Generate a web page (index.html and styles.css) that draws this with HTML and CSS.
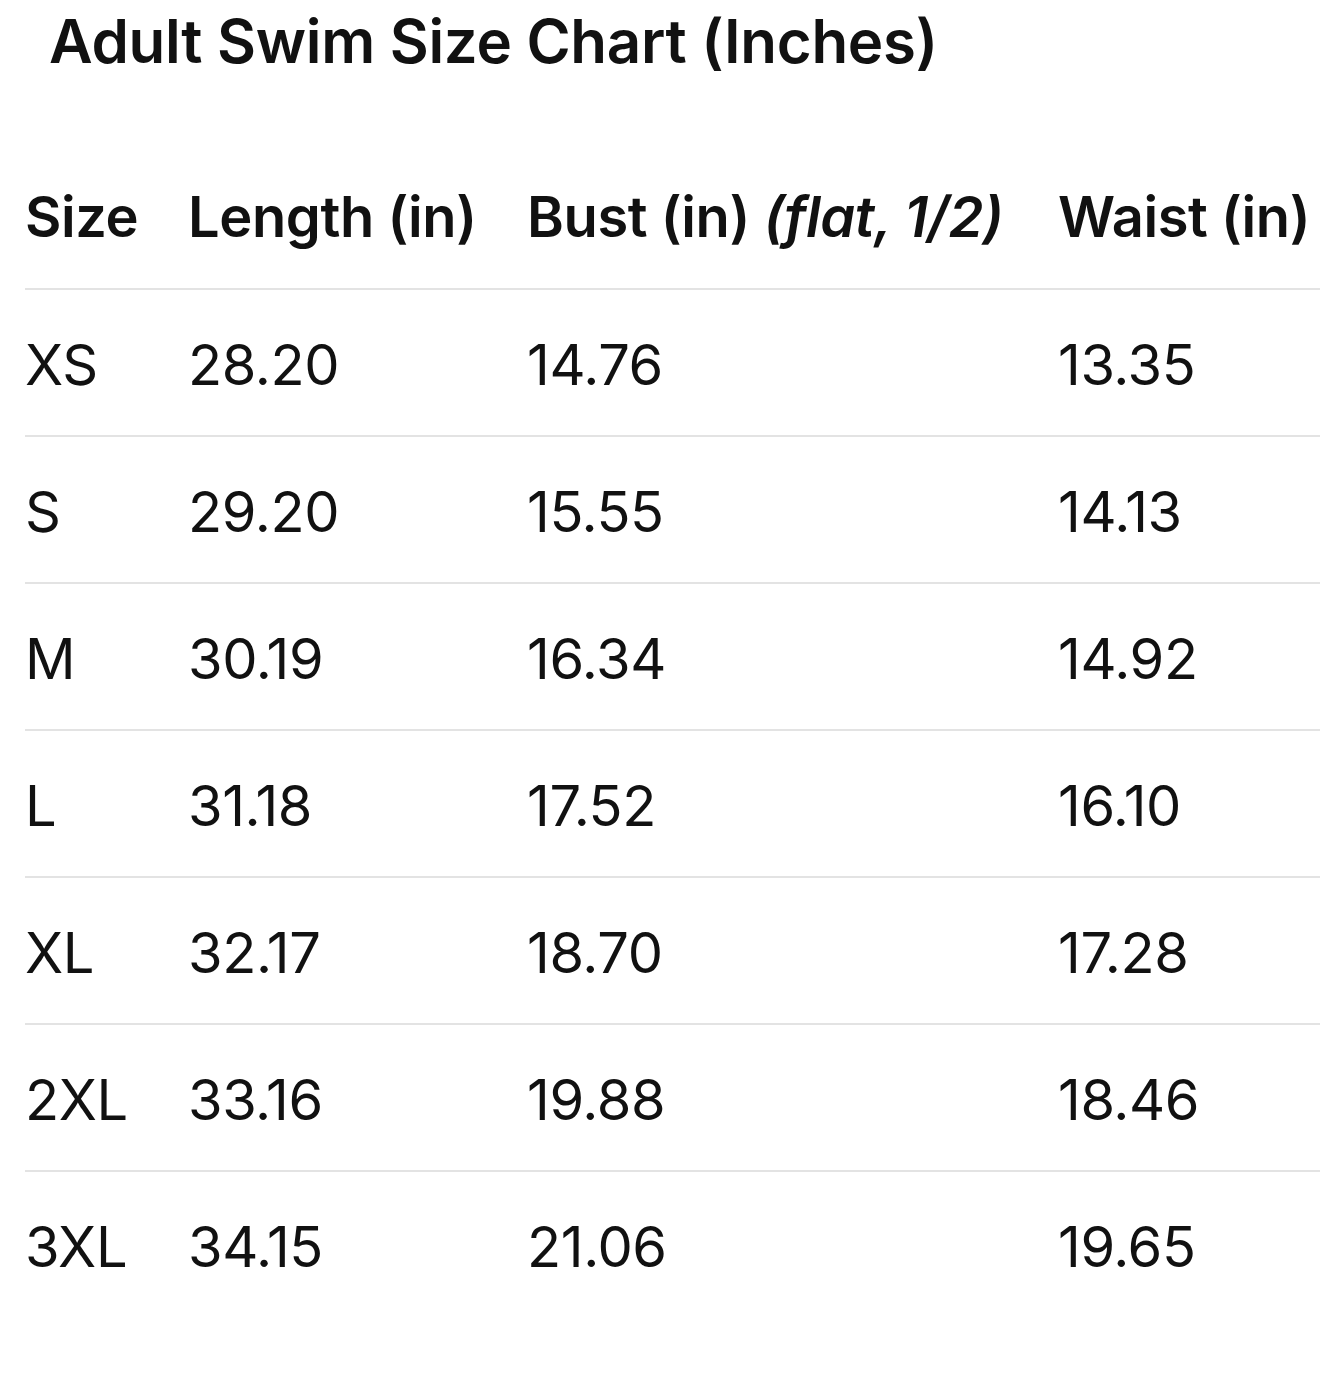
FILE: index.html
```html
<!DOCTYPE html>
<html lang="en">
<head>
<meta charset="utf-8">
<title>Adult Swim Size Chart</title>
<link rel="stylesheet" href="styles.css">
</head>
<body>
<main class="page">
  <h1 class="title">Adult Swim Size Chart (Inches)</h1>
  <table class="chart">
    <colgroup>
      <col class="c-size"><col class="c-len"><col class="c-bust"><col class="c-waist">
    </colgroup>
    <thead>
      <tr>
        <th>Size</th>
        <th>Length (in)</th>
        <th>Bust (in) <em>(flat, 1/2)</em></th>
        <th>Waist (in)</th>
      </tr>
    </thead>
    <tbody>
      <tr><td>XS</td><td>28.20</td><td>14.76</td><td>13.35</td></tr>
      <tr><td>S</td><td>29.20</td><td>15.55</td><td>14.13</td></tr>
      <tr><td>M</td><td>30.19</td><td>16.34</td><td>14.92</td></tr>
      <tr><td>L</td><td>31.18</td><td>17.52</td><td>16.10</td></tr>
      <tr><td>XL</td><td>32.17</td><td>18.70</td><td>17.28</td></tr>
      <tr><td>2XL</td><td>33.16</td><td>19.88</td><td>18.46</td></tr>
      <tr><td>3XL</td><td>34.15</td><td>21.06</td><td>19.65</td></tr>
    </tbody>
  </table>
</main>
</body>
</html>
```
FILE: styles.css
```css
html, body {
  margin: 0;
  padding: 0;
  background: #ffffff;
  overflow: hidden;
}
body {
  font-family: Inter, "Noto Sans", "Liberation Sans", sans-serif;
  color: #111111;
}
.page {
  padding: 0 0 0 25px;
}
.title {
  margin: 0;
  padding: 3px 0 0 24px;
  font-size: 60px;
  font-weight: 600;
  line-height: 76px;
  letter-spacing: -0.3px;
}
.chart {
  margin-top: 105px;
  width: 1295px;
  border-collapse: collapse;
  table-layout: fixed;
}
.c-size { width: 163px; }
.c-len { width: 339px; }
.c-bust { width: 531px; }
.c-waist { width: 262px; }
.chart th,
.chart td {
  text-align: left;
  padding: 0;
  white-space: nowrap;
  font-size: 56px;
  letter-spacing: -0.4px;
}
.chart th {
  font-weight: 600;
  vertical-align: top;
  line-height: 66px;
  border-bottom: 2px solid #e3e3e3;
}
.chart thead tr {
  height: 105px;
}
.chart th em {
  font-style: italic;
}
.chart td {
  font-weight: 400;
  height: 147px;
  padding-top: 4px;
  box-sizing: border-box;
  border-bottom: 2px solid #e3e3e3;
  vertical-align: middle;
}
.chart tbody tr {
  height: 147px;
}
.chart tbody tr:last-child td {
  border-bottom: none;
}
```
